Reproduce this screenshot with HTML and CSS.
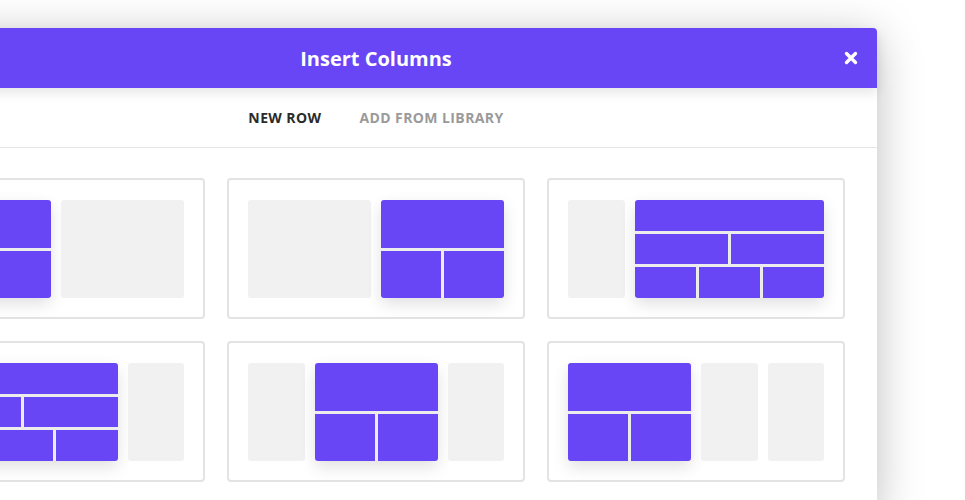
FILE: index.html
```html
<!DOCTYPE html>
<html lang="en">
<head>
  <meta charset="UTF-8" />
  <title>Insert Columns</title>
  <link rel="stylesheet" href="styles.css">
</head>
<body>

  <div class="modal">
    <header class="modal-header">
      <h1>Insert Columns</h1>
      <button class="close" aria-label="Close">
        <svg width="14" height="14" viewBox="0 0 14 14">
          <path d="M2.5 2.5 L11.5 11.5 M11.5 2.5 L2.5 11.5" stroke="#fff" stroke-width="3.4" stroke-linecap="round"/>
        </svg>
      </button>
    </header>

    <nav class="tabs">
      <a class="tab active">New Row</a>
      <a class="tab">Add From Library</a>
    </nav>

    <main class="layouts">
      <!-- 1/2 + 1/2 -->
      <div class="card">
        <div class="block span-2">
          <div class="line"><span></span></div>
          <div class="line"><span></span><span></span></div>
        </div>
        <div class="empty span-2"></div>
      </div>

      <div class="card">
        <div class="empty span-2"></div>
        <div class="block span-2">
          <div class="line"><span></span></div>
          <div class="line"><span></span><span></span></div>
        </div>
      </div>

      <!-- 1/4 + 3/4 -->
      <div class="card">
        <div class="empty"></div>
        <div class="block span-3">
          <div class="line"><span></span></div>
          <div class="line"><span></span><span></span></div>
          <div class="line"><span></span><span></span><span></span></div>
        </div>
      </div>

      <div class="card">
        <div class="block span-3">
          <div class="line"><span></span></div>
          <div class="line"><span></span><span></span></div>
          <div class="line"><span></span><span></span><span></span></div>
        </div>
        <div class="empty"></div>
      </div>

      <!-- 1/4 + 1/2 + 1/4 -->
      <div class="card">
        <div class="empty"></div>
        <div class="block span-2">
          <div class="line"><span></span></div>
          <div class="line"><span></span><span></span></div>
        </div>
        <div class="empty"></div>
      </div>

      <div class="card">
        <div class="block span-2">
          <div class="line"><span></span></div>
          <div class="line"><span></span><span></span></div>
        </div>
        <div class="empty"></div>
        <div class="empty"></div>
      </div>
    </main>
  </div>

</body>
</html>
```

FILE: styles.css
```css
body {
  font-family: 'Open Sans', 'Liberation Sans', sans-serif;
  background: #fff;
  margin: 0;
  padding: 0;
  overflow: hidden;
  height: 500px;
}

.modal {
  width: 1002px;
  margin: 28px 0 0 -125px;
  background: #fff;
  border-radius: 4px 4px 0 0;
  box-shadow: 0 8px 45px rgba(0,0,0,0.26);
}

.modal-header {
  position: relative;
  height: 60px;
  background: #6846f5;
  border-radius: 4px 4px 0 0;
  box-shadow: 0 5px 12px rgba(0,0,0,0.1);
  display: flex;
  align-items: center;
  justify-content: center;
}

.modal-header h1 {
  margin: 0;
  color: #fff;
  font-size: 20px;
  font-weight: 700;
}

.close {
  position: absolute;
  right: 19px;
  top: 23px;
  padding: 0;
  border: none;
  background: none;
  width: 14px;
  height: 14px;
  cursor: pointer;
}

.close svg {
  display: block;
}

.tabs {
  height: 59px;
  border-bottom: 1px solid #e6e6e6;
  display: flex;
  align-items: center;
  justify-content: center;
  gap: 38px;
}

.tab {
  font-size: 14px;
  font-weight: 700;
  text-transform: uppercase;
  letter-spacing: 0.4px;
  color: #9a9a9a;
  cursor: pointer;
}

.tab.active {
  color: #2b2b2b;
}

.layouts {
  padding: 30px 32px;
  display: grid;
  grid-template-columns: repeat(3, 298px);
  gap: 22px;
}

.card {
  height: 98px;
  padding: 20px 19px 19px;
  border: 2px solid #e3e3e3;
  border-radius: 4px;
  display: grid;
  grid-template-columns: repeat(4, 1fr);
  gap: 10px;
}

.empty {
  background: #f1f1f1;
  border-radius: 3px;
}

.span-2 { grid-column: span 2; }
.span-3 { grid-column: span 3; }

.block {
  display: flex;
  flex-direction: column;
  gap: 3px;
  background: #ececec;
  border-radius: 3px;
  overflow: hidden;
  box-shadow: 0 6px 16px rgba(0,0,0,0.12);
}

.line {
  flex: 1;
  display: flex;
  gap: 3px;
}

.line span {
  flex: 1;
  background: #6846f5;
}
```
